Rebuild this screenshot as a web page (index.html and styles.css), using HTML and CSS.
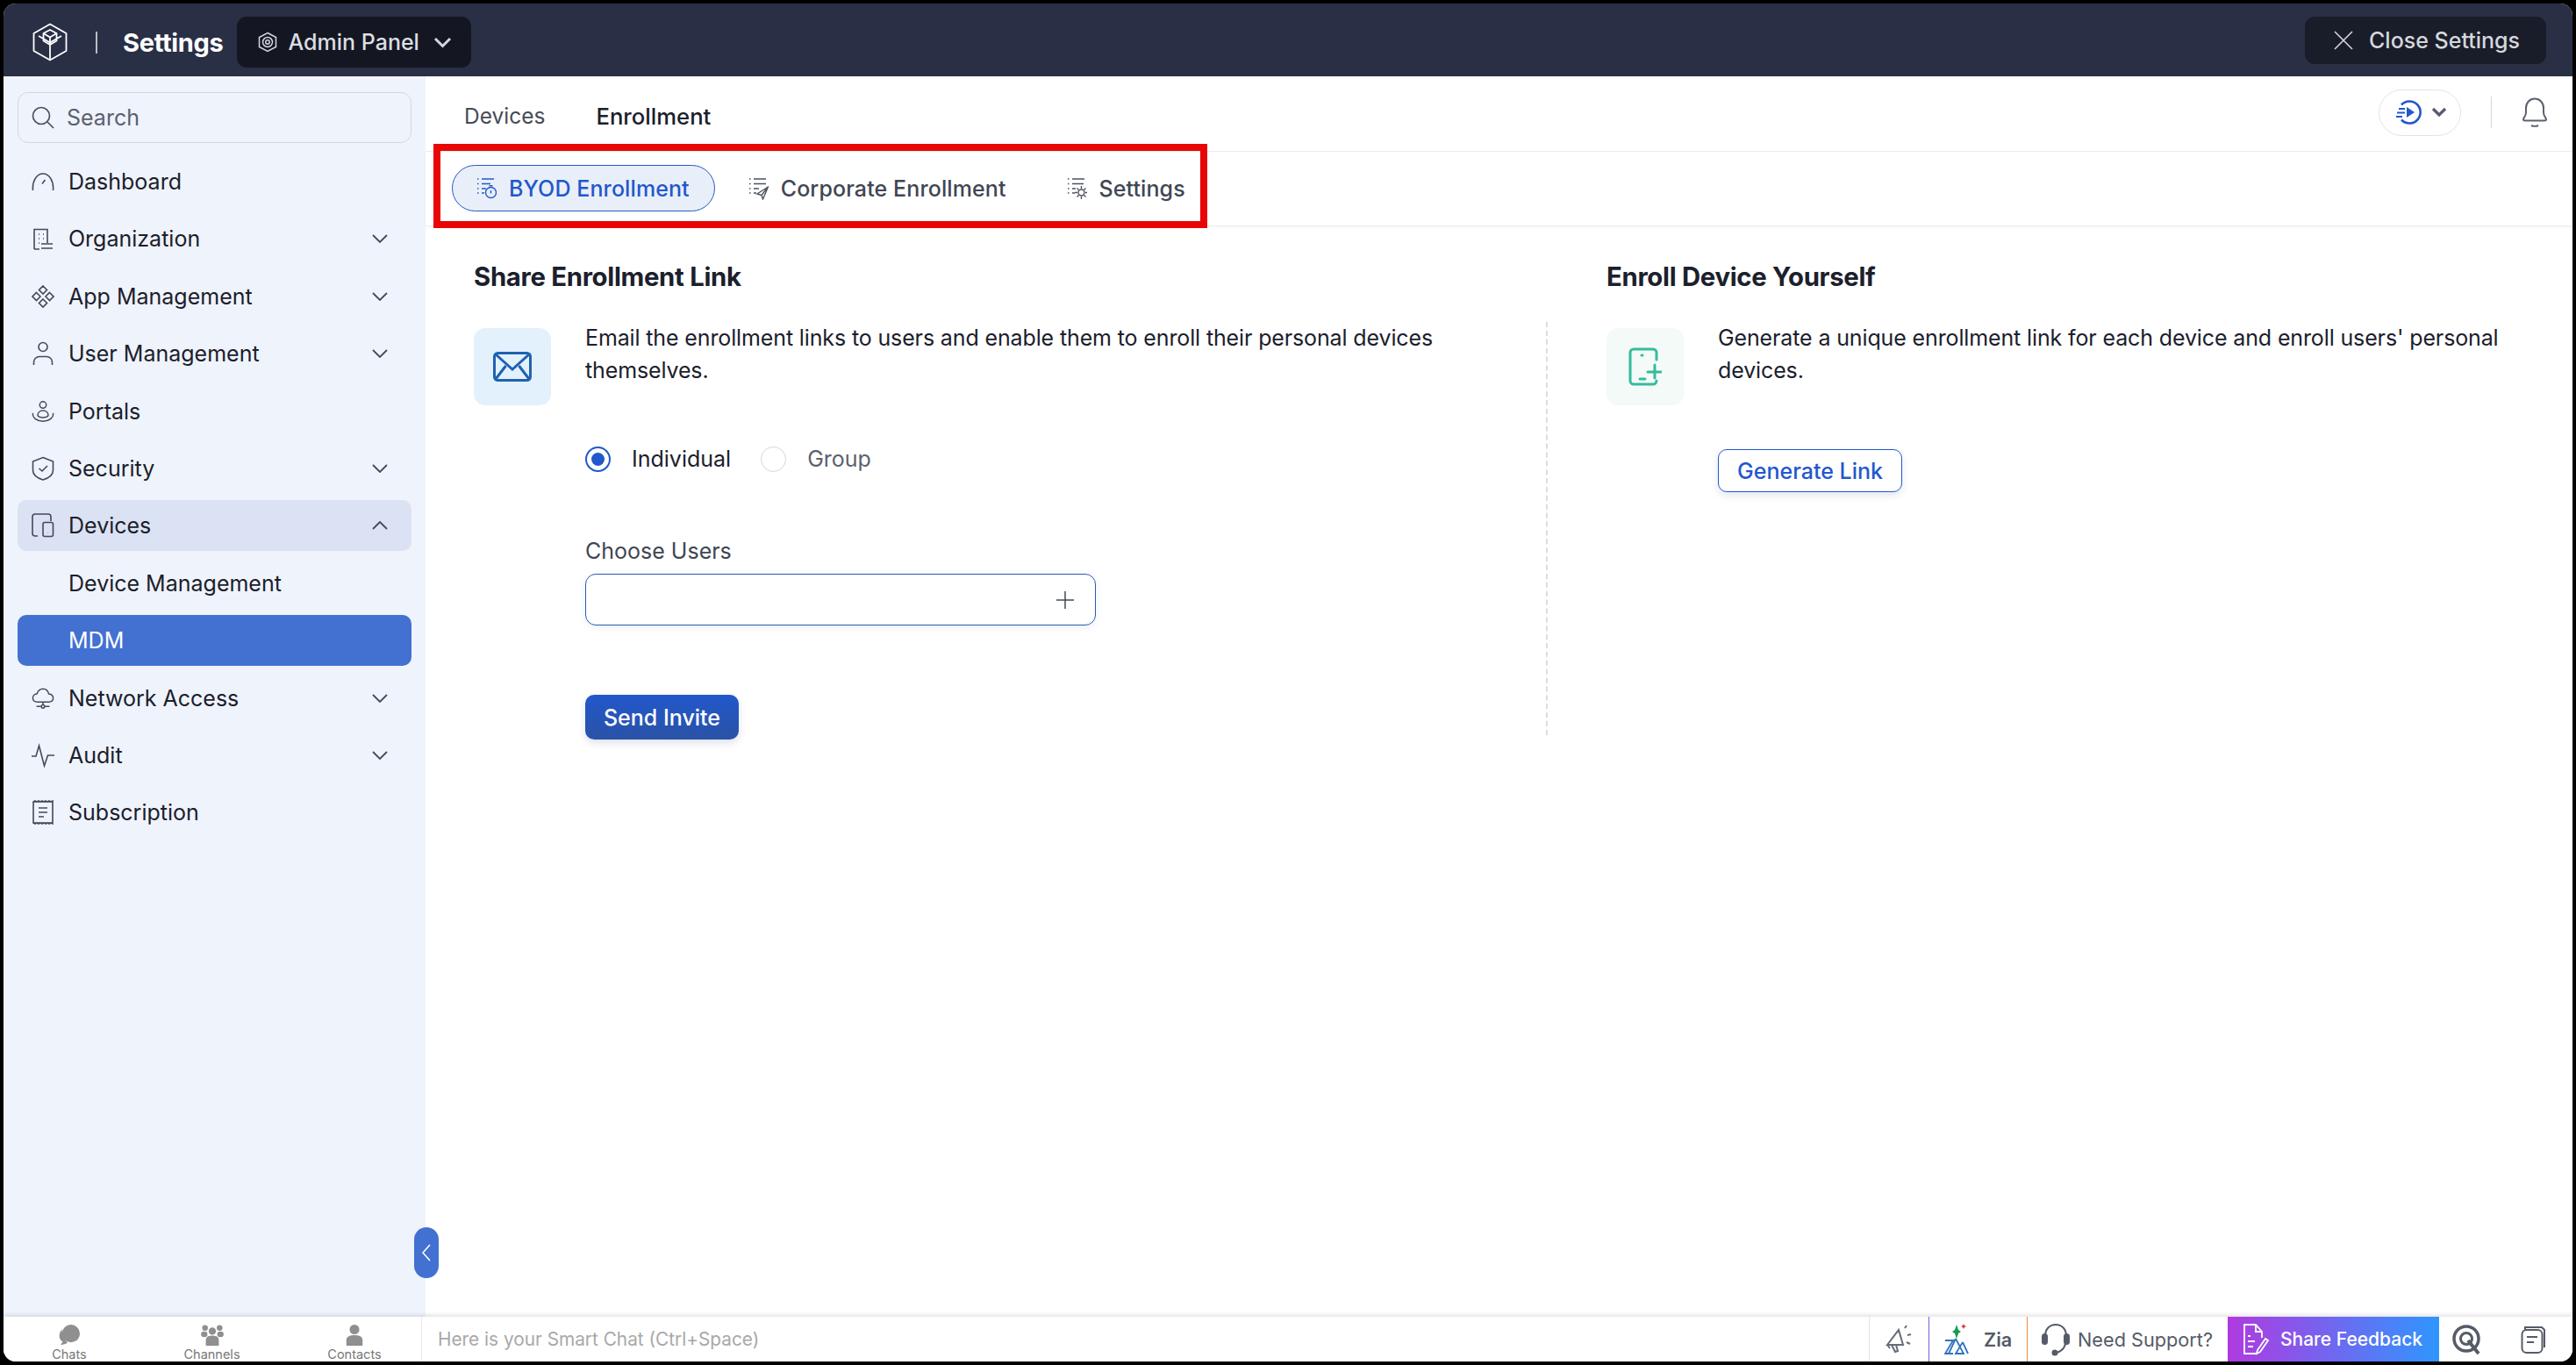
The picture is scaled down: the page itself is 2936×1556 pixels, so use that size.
FILE: index.html
```html
<!DOCTYPE html>
<html lang="en">
<head>
    <meta charset="UTF-8">
    <title>Settings - MDM Enrollment</title>
    <link rel="stylesheet" href="styles.css">
</head>
<body>
<div class="window">
    <header class="topbar">
        <svg class="logo" viewBox="0 0 40 44" fill="none" stroke="#fff" stroke-width="1.8" stroke-linejoin="round">
            <path d="M20 1.5 38.5 12v20L20 42.5 1.5 32V12z"/>
            <path d="M7 15 20 22.5 33 15M20 22.5V42M12.5 12 20 8l7.5 4v8.5L20 25l-7.500-4.500z"/>
            <path d="M12.500 12 20 16.500 27.500 12M20 16.500V25"/>
        </svg>
        <span class="top-sep"></span>
        <span class="top-title">Settings</span>
        <div class="panel-btn">
            <svg class="panel-icon" viewBox="0 0 22 24" fill="none" stroke="#d5d7dd" stroke-width="1.500">
                <path d="M11 1.500 20.500 6.500v11L11 22.500 1.500 17.500v-11z"/>
                <circle cx="11" cy="12" r="5.500"/><circle cx="11" cy="12" r="2.200"/>
            </svg>
            <span>Admin Panel</span>
            <svg class="panel-caret" viewBox="0 0 21 14" fill="none" stroke="#d5d7dd" stroke-width="3"><path d="M2 3l8.500 8.500L19 3"/></svg>
        </div>
        <div class="close-btn">
            <svg class="close-icon" viewBox="0 0 22 22" fill="none" stroke="#d5d7dd" stroke-width="1.600"><path d="M1 1l20 20M21 1 1 21"/></svg>
            <span>Close Settings</span>
        </div>
    </header>

    <div class="middle">
        <aside class="sidebar">
            <div class="search">
                <svg class="search-icon" viewBox="0 0 26 26" fill="none" stroke="#4a5160" stroke-width="1.700"><circle cx="11" cy="11" r="9.500"/><path d="M18 18l7 7"/></svg>
                <span>Search</span>
            </div>
            <nav>
                <div class="nav-item">
                    <svg class="nav-icon" viewBox="0 0 26 26"><path d="M1.500 23C.500 12 6 4 13 4s12.500 8 11.500 19M15.500 11 12 15.500"/></svg>
                    <span>Dashboard</span>
                </div>
                <div class="nav-item">
                    <svg class="nav-icon" viewBox="0 0 26 26"><path d="M3 25V2.500h15V18M3 25h6M11 19h13M11 24h13M8 8h1M13 8h1M8 13h1M13 13h1M8 18h1"/></svg>
                    <span>Organization</span>
                    <svg class="caret" viewBox="0 0 18 10"><path d="M1 1l8 8 8-8"/></svg>
                </div>
                <div class="nav-item">
                    <svg class="nav-icon" viewBox="0 0 26 26"><path d="M13 1l4.500 4.500L13 10 8.500 5.500zM13 16l4.500 4.500L13 25l-4.500-4.500zM5.500 8.500 10 13l-4.500 4.500L1 13zM20.500 8.500 25 13l-4.500 4.500L16 13z"/></svg>
                    <span>App Management</span>
                    <svg class="caret" viewBox="0 0 18 10"><path d="M1 1l8 8 8-8"/></svg>
                </div>
                <div class="nav-item">
                    <svg class="nav-icon" viewBox="0 0 26 28"><circle cx="13" cy="6.500" r="5"/><path d="M2.500 27v-3c0-4 3-6.500 6.500-6.500h8c3.500 0 6.500 2.500 6.500 6.500v3"/></svg>
                    <span>User Management</span>
                    <svg class="caret" viewBox="0 0 18 10"><path d="M1 1l8 8 8-8"/></svg>
                </div>
                <div class="nav-item">
                    <svg class="nav-icon" viewBox="0 0 28 26"><circle cx="14" cy="5" r="4"/><path d="M7.500 18c0-4 3-6 6.500-6s6.500 2 6.500 6M1.500 15c-.500 6 5 10 12.500 10s13-4 12.500-10M7.500 18c1 1.500 3.500 2.500 6.500 2.500s5.500-1 6.500-2.500"/></svg>
                    <span>Portals</span>
                </div>
                <div class="nav-item">
                    <svg class="nav-icon" viewBox="0 0 26 28"><path d="M13 1.500 24.500 6v10c0 5-5 9-11.500 11C6.500 25 1.500 21 1.500 16V6z"/><path d="M8.500 14l3.500 3 6-6"/></svg>
                    <span>Security</span>
                    <svg class="caret" viewBox="0 0 18 10"><path d="M1 1l8 8 8-8"/></svg>
                </div>
                <div class="nav-item nav-open">
                    <svg class="nav-icon" viewBox="0 0 26 28"><path d="M7 26H4a3 3 0 0 1-3-3V4a3 3 0 0 1 3-3h15a3 3 0 0 1 3 3v5"/><rect x="13" y="10.500" width="11.500" height="16" rx="2"/><path d="M18.700 22.500h.2"/></svg>
                    <span>Devices</span>
                    <svg class="caret" viewBox="0 0 18 10"><path d="M1 9l8-8 8 8"/></svg>
                </div>
                <div class="nav-item nav-sub"><span>Device Management</span></div>
                <div class="nav-item nav-sub nav-active"><span>MDM</span></div>
                <div class="nav-item">
                    <svg class="nav-icon" viewBox="0 0 28 26"><path d="M7 17.500c-3.500 0-5.500-2-5.500-5s2.500-5 5-5C8 3.500 11 1.500 14 1.500s6 2 7 6c2.500 0 5.500 2 5.500 5s-2 5-5.500 5z"/><path d="M14 17.500V21M6 23h5.500M16.500 23H22"/><circle cx="14" cy="23" r="2"/></svg>
                    <span>Network Access</span>
                    <svg class="caret" viewBox="0 0 18 10"><path d="M1 1l8 8 8-8"/></svg>
                </div>
                <div class="nav-item">
                    <svg class="nav-icon" viewBox="0 0 26 26"><path d="M0 14h5l3.500-12 6 23 4-12h7.500"/></svg>
                    <span>Audit</span>
                    <svg class="caret" viewBox="0 0 18 10"><path d="M1 1l8 8 8-8"/></svg>
                </div>
                <div class="nav-item">
                    <svg class="nav-icon" viewBox="0 0 26 28"><path d="M2 2h22v24H2zM2 2l2-1 2 1 2-1 2 1 2-1 2 1 2-1 2 1 2-1 2 1 2-1 0 1M2 26l2 1 2-1 2 1 2-1 2 1 2-1 2 1 2-1 2 1 2-1 2 1 0-1M8 9h10M8 14h10M8 19h6"/></svg>
                    <span>Subscription</span>
                </div>
            </nav>
        </aside>

        <main class="content">
            <div class="tabs">
                <span class="tab">Devices</span>
                <span class="tab tab-current">Enrollment</span>
                <div class="tabs-right">
                    <div class="play-pill">
                        <svg class="play-icon" viewBox="0 0 30 30" fill="none" stroke="#2258cc" stroke-width="2.600">
                            <path d="M6 6.500A12.500 12.500 0 1 1 6 23.500"/>
                            <path d="M12 9l9 6-9 6z" fill="#2258cc" stroke="none"/>
                            <path d="M3 11h7M1 15.500h9M0 20h7" stroke-width="2"/>
                        </svg>
                        <svg class="play-caret" viewBox="0 0 18 12" fill="none" stroke="#565c6a" stroke-width="3.200"><path d="M2 2l7 7 7-7"/></svg>
                    </div>
                    <span class="right-sep"></span>
                    <svg class="bell" viewBox="0 0 30 34" fill="none" stroke="#5b6270" stroke-width="2"><path d="M2 25c0-2 3-3 3-8v-5C5 6 9.500 1.500 15 1.500S25 6 25 12v5c0 5 3 6 3 8 0 1-1 1.500-2 1.500H4c-1 0-2-.5-2-1.500z"/><path d="M11 32c2 1 6 1 8 0"/></svg>
                </div>
            </div>

            <div class="subtabs">
                <div class="subtab subtab-current">
                    <svg class="sub-icon" viewBox="0 0 22 26"><path d="M5 2h14M0 2h1.500M0 7.500h1.500M5 7.500h10M0 13h1.500M5 13h5M0 18h1.500M5 18h3"/><circle cx="15.500" cy="17.500" r="6"/><path d="M15.500 15v3.500M13.500 9.800h4"/></svg>
                    <span>BYOD Enrollment</span>
                </div>
                <div class="subtab">
                    <svg class="sub-icon" viewBox="0 0 22 26"><path d="M5 2h14M0 2h1.500M0 7.500h1.500M5 7.500h14M0 13h1.500M5 13h6M0 18h1.500M5 18h3"/><path d="M21.500 11 9 19l5 1.500 1.500 4.500zM14 20.500l7.500-9.500"/></svg>
                    <span>Corporate Enrollment</span>
                </div>
                <div class="subtab">
                    <svg class="sub-icon" viewBox="0 0 22 26"><path d="M5 2h14M0 2h1.500M0 7.500h1.500M5 7.500h13M0 13h1.500M5 13h4M0 18h1.500M5 18h3"/><circle cx="15.500" cy="17.500" r="3.500"/><path d="M15.500 10v3M15.500 22v3M8 17.500h3M20 17.500h2M10.500 12.500l2 2M18.500 20.500l2 2M20.500 12.500l-2 2M12.500 20.500l-2 2"/></svg>
                    <span>Settings</span>
                </div>
            </div>

            <div class="columns">
                <section class="col-left">
                    <h2 class="col-title">Share Enrollment Link</h2>
                    <div class="col-body">
                        <div class="icon-box icon-box-blue">
                            <svg class="mail-icon" viewBox="0 0 44 34" fill="none" stroke="#1f62b0" stroke-width="3"><rect x="1.500" y="1.500" width="41" height="31" rx="4"/><path d="M3 3l19 17L41 3M3 31l11.500-15M41 31 29.500 16"/></svg>
                        </div>
                        <div class="col-main">
                            <p class="desc">Email the enrollment links to users and enable them to enroll their personal devices themselves.</p>
                            <div class="radios">
                                <span class="radio radio-on"></span>
                                <span class="radio-label">Individual</span>
                                <span class="radio"></span>
                                <span class="radio-label radio-label-off">Group</span>
                            </div>
                            <label class="field-label">Choose Users</label>
                            <div class="user-input">
                                <svg class="plus" viewBox="0 0 20 20" fill="none" stroke="#444a56" stroke-width="1.500"><path d="M10 0v20M0 10h20"/></svg>
                            </div>
                            <div class="btn-primary">Send Invite</div>
                        </div>
                    </div>
                </section>
                <section class="col-right">
                    <h2 class="col-title col-title-right">Enroll Device Yourself</h2>
                    <div class="col-body col-body-right">
                        <div class="icon-box icon-box-green">
                            <svg class="phone-icon" viewBox="0 0 38 44" fill="none" stroke="#37bb9c" stroke-width="3" stroke-linecap="round"><path d="M32 14V6a4 4 0 0 0-4-4H6a4 4 0 0 0-4 4v32a4 4 0 0 0 4 4h22a4 4 0 0 0 4-4"/><path d="M30 20v15M22 28h15M13 36h6M15 9h1"/></svg>
                        </div>
                        <div class="col-main">
                            <p class="desc">Generate a unique enrollment link for each device and enroll users' personal devices.</p>
                            <div class="btn-outline">Generate Link</div>
                        </div>
                    </div>
                </section>
            </div>
        </main>
    </div>

    <footer class="bottombar">
        <div class="chat-tabs">
            <div class="chat-tab">
                <svg viewBox="0 0 28 26" fill="#8f8f8f"><circle cx="16" cy="11" r="11"/><path d="M5 6C0 11 1 19 6 21l-3 4c4 0 7-1 9-3-3-2-7-7-7-16z"/></svg>
                <span>Chats</span>
            </div>
            <div class="chat-tab">
                <svg viewBox="0 0 28 26" fill="#8f8f8f"><circle cx="5" cy="4" r="3.500"/><circle cx="23" cy="4" r="3.500"/><circle cx="14" cy="8" r="4.500"/><ellipse cx="4" cy="12" rx="4" ry="3.500"/><ellipse cx="24" cy="12" rx="4" ry="3.500"/><path d="M6 26v-7c0-4 3-5.500 8-5.500s8 1.500 8 5.500v7z"/></svg>
                <span>Channels</span>
            </div>
            <div class="chat-tab">
                <svg viewBox="0 0 28 26" fill="#8f8f8f"><circle cx="14" cy="6" r="6"/><path d="M4 26v-7c0-4 4-6 10-6s10 2 10 6v7z"/></svg>
                <span>Contacts</span>
            </div>
        </div>
        <div class="smart-chat">Here is your Smart Chat (Ctrl+Space)</div>
        <div class="bar-item bar-announce">
            <svg class="bar-icon" viewBox="0 0 32 34" fill="none" stroke="#666c78" stroke-width="2"><path d="M2 23 15 6l5 17zM5 27l-3-4M7 23l4 8 3-1-2-7M22 4l2-3M25 12l4-1M24 20l4 2"/></svg>
        </div>
        <div class="bar-item bar-zia">
            <svg class="zia-icon" viewBox="0 0 28 36" fill="none" stroke="#2f73c0" stroke-width="1.800"><path d="M1 19h9L1 34h9M13 17 5 34M13 17l9 17h-9l8-13M21 21l6 13"/><path d="M14 1l2 6 3 2-3 2-2 6-2-6-3-2 3-2z" fill="#149a52" stroke="none"/><path d="M22 0l1 2 2 1-2 1-1 2-1-2-2-1 2-1z" fill="#e03535" stroke="none"/></svg>
            <span>Zia</span>
        </div>
        <div class="bar-item bar-support">
            <svg class="head-icon" viewBox="0 0 32 38" fill="none" stroke="#555b68" stroke-width="2"><path d="M4 17v-2C4 7 9 2 16 2s12 5 12 13v2c0 9-4 15-11 17"/><rect x="1" y="13" width="5" height="11" rx="2.500" fill="#555b68"/><rect x="26" y="13" width="5" height="11" rx="2.500" fill="#555b68"/><circle cx="15" cy="34" r="2.500" fill="#555b68"/></svg>
            <span>Need Support?</span>
        </div>
        <div class="share-feedback">
            <svg class="doc-icon" viewBox="0 0 30 36" fill="none" stroke="#fff" stroke-width="1.800"><path d="M17 34H2V1h13l7 8v7M15 1v8h7M6 14h3M6 20h8M6 26h6M17 30l9-13 3 2-9 13-4 2z"/></svg>
            <span>Share Feedback</span>
        </div>
        <div class="bar-end">
            <svg class="q-icon" viewBox="0 0 34 36" fill="none" stroke="#555b68"><circle cx="16" cy="17" r="14" stroke-width="3.500"/><circle cx="16" cy="17" r="6.500" stroke-width="3"/><path d="M18 19l12 15" stroke-width="4"/></svg>
            <svg class="note-icon" viewBox="0 0 28 34" fill="none" stroke="#555b68" stroke-width="2"><path d="M5 6V3l19 0 3 3v20"/><rect x="1.500" y="6" width="23" height="26" rx="5"/><path d="M7 14h12M7 20h8"/></svg>
        </div>
    </footer>

    <div class="collapse-btn">
        <svg viewBox="0 0 10 20" fill="none" stroke="#fff" stroke-width="1.600"><path d="M9 1 1 10l8 9"/></svg>
    </div>
    <div class="highlight-box"></div>
</div>
</body>
</html>
```
FILE: styles.css
```css
* {
    box-sizing: border-box;
}
html, body {
    height: 100%;
}
body {
    margin: 0;
    padding: 4px;
    background-color: #000000;
    font-family: Inter, "Noto Sans", sans-serif;
    font-size: 25px;
    color: #1b202c;
    overflow: hidden;
}
.window {
    position: relative;
    display: flex;
    flex-direction: column;
    height: 100%;
    background-color: #ffffff;
    border-radius: 14px;
    overflow: hidden;
}

/* top bar */
.topbar {
    display: flex;
    align-items: center;
    flex: 0 0 83px;
    padding: 5px 30px 0 33px;
    background-color: #292f45;
    color: #ffffff;
}
.logo {
    width: 40px;
    height: 44px;
}
.top-sep {
    width: 2px;
    height: 25px;
    margin: 0 29px 0 32px;
    background-color: #b9bcc6;
}
.top-title {
    font-size: 29px;
    font-weight: 700;
    letter-spacing: -0.3px;
}
.panel-btn {
    display: flex;
    align-items: center;
    width: 267px;
    height: 58px;
    margin-left: 15px;
    padding-left: 24px;
    border-radius: 11px;
    background-color: #141722;
    color: #dcdee3;
    font-weight: 500;
}
.panel-icon {
    width: 22px;
    height: 24px;
    margin-right: 13px;
}
.panel-caret {
    width: 21px;
    height: 14px;
    margin-left: 16px;
}
.close-btn {
    display: flex;
    align-items: center;
    align-self: flex-start;
    width: 275px;
    height: 54px;
    margin: 10px 0 0 auto;
    padding-left: 33px;
    border-radius: 11px;
    background-color: #191d29;
    color: #d5d7dd;
    font-weight: 500;
}
.close-icon {
    width: 22px;
    height: 22px;
    margin-right: 18px;
}

.middle {
    display: flex;
    flex: 1;
    min-height: 0;
}

/* sidebar */
.sidebar {
    flex: 0 0 481px;
    padding: 18px 16px 0;
    background-color: #eff3fb;
}
.search {
    display: flex;
    align-items: center;
    height: 58px;
    margin-bottom: 15px;
    padding-left: 15px;
    border: 1px solid #d3d7de;
    border-radius: 12px;
    color: #5a6170;
}
.search-icon {
    width: 26px;
    height: 26px;
    margin-right: 14px;
}
.nav-item {
    display: flex;
    align-items: center;
    height: 58px;
    margin-bottom: 7.4px;
    padding: 0 27px 0 16px;
    border-radius: 10px;
}
.nav-icon {
    flex: 0 0 26px;
    height: 28px;
    margin-right: 16px;
    fill: none;
    stroke: #444a57;
    stroke-width: 1.600;
}
.caret {
    width: 18px;
    height: 10px;
    margin-left: auto;
    fill: none;
    stroke: #444a57;
    stroke-width: 1.800;
}
.nav-open {
    background-color: #dbe2f3;
}
.nav-sub {
    padding-left: 58px;
}
.nav-active {
    background-color: #4371d1;
    color: #ffffff;
}

/* content */
.content {
    flex: 1;
    min-width: 0;
}
.tabs {
    display: flex;
    align-items: center;
    height: 86px;
    padding: 5px 28px 0 44px;
    border-bottom: 1px solid #ececef;
}
.tab {
    margin-right: 58px;
    color: #454b58;
    font-size: 24.500px;
}
.tab-current {
    color: #1b202c;
    font-size: 25.700px;
    font-weight: 500;
}
.tabs-right {
    display: flex;
    align-items: center;
    margin-left: auto;
    margin-top: -8px;
}
.play-pill {
    display: flex;
    align-items: center;
    width: 94px;
    height: 53px;
    padding-left: 19px;
    border: 1px solid #e1e3e8;
    border-radius: 27px;
}
.play-icon {
    width: 30px;
    height: 30px;
}
.play-caret {
    width: 18px;
    height: 12px;
    margin-left: 10px;
}
.right-sep {
    width: 1px;
    height: 36px;
    margin: 0 34px;
    background-color: #d5d7dc;
}
.bell {
    width: 30px;
    height: 34px;
}
.subtabs {
    display: flex;
    align-items: center;
    gap: 8px;
    height: 85px;
    padding: 0 0 1px 30px;
    border-bottom: 1px solid #ececef;
    box-shadow: 0 2px 4px rgba(0, 0, 0, 0.03);
}
.subtab {
    display: flex;
    align-items: center;
    height: 53px;
    padding: 0 30px;
    border: 1px solid transparent;
    border-radius: 27px;
    color: #404653;
    font-weight: 500;
    letter-spacing: 0.1px;
}
.sub-icon {
    width: 22px;
    height: 26px;
    margin-right: 14px;
    fill: none;
    stroke: #4c5260;
    stroke-width: 1.400;
}
.subtab-current {
    padding: 0 28px;
    border-color: #2258cc;
    background-color: #e9eff9;
    color: #2258cc;
}
.subtab-current .sub-icon {
    stroke: #2258cc;
}

.columns {
    display: flex;
    padding: 42px 0 0 55px;
}
.col-left {
    flex: 0 0 1222px;
}
.col-right {
    flex: 1;
    min-width: 0;
}
.col-title {
    height: 32px;
    margin: 0 0 35px;
    font-size: 29.300px;
    font-weight: 700;
    line-height: 32px;
    letter-spacing: -0.3px;
}
.col-title-right {
    margin-left: 69px;
}
.col-body {
    display: flex;
    gap: 39px;
}
.col-body-right {
    min-height: 471px;
    padding-left: 67px;
    border-left: 2px dashed #dcdde0;
}
.icon-box {
    display: flex;
    align-items: center;
    justify-content: center;
    flex: 0 0 88px;
    height: 88px;
    margin-top: 7px;
    border-radius: 13px;
}
.icon-box-blue {
    background-color: #e3f1fd;
}
.icon-box-green {
    background-color: #f3faf7;
}
.mail-icon {
    width: 44px;
    height: 34px;
}
.phone-icon {
    width: 38px;
    height: 44px;
}
.col-main {
    flex: 1;
    min-width: 0;
}
.desc {
    max-width: 1040px;
    margin: 0;
    line-height: 37px;
    letter-spacing: -0.13px;
}
.col-right .desc {
    max-width: 940px;
}
.radios {
    display: flex;
    align-items: center;
    height: 30px;
    margin-top: 67px;
}
.radio {
    position: relative;
    flex: 0 0 29px;
    height: 29px;
    border: 1px solid #d5d7dc;
    border-radius: 50%;
}
.radio-on {
    border: 2px solid #2258cc;
}
.radio-on::after {
    content: "";
    position: absolute;
    top: 5px;
    left: 5px;
    width: 15px;
    height: 15px;
    border-radius: 50%;
    background-color: #2258cc;
}
.radio-label {
    margin: 0 34px 0 24px;
}
.radio-label-off {
    color: #5a6170;
}
.field-label {
    display: block;
    height: 30px;
    margin-top: 75px;
    color: #404653;
    line-height: 30px;
}
.user-input {
    display: flex;
    align-items: center;
    justify-content: flex-end;
    width: 582px;
    height: 59px;
    margin-top: 11px;
    padding-right: 24px;
    border: 1.500px solid #2a5ab0;
    border-radius: 12px;
    box-shadow: 0 2px 10px rgba(50, 90, 200, 0.1);
}
.plus {
    width: 20px;
    height: 20px;
}
.btn-primary {
    display: flex;
    align-items: center;
    justify-content: center;
    width: 175px;
    height: 51px;
    margin-top: 79px;
    border-radius: 10px;
    background: linear-gradient(#2258cc, #2a52a6);
    box-shadow: 0 4px 8px rgba(30, 60, 130, 0.15);
    color: #ffffff;
    font-weight: 500;
}
.btn-outline {
    display: flex;
    align-items: center;
    justify-content: center;
    width: 210px;
    height: 49px;
    margin-top: 71px;
    border: 1.500px solid #2258cc;
    border-radius: 10px;
    box-shadow: 0 4px 8px rgba(30, 60, 130, 0.12);
    color: #2258cc;
    font-weight: 500;
}

/* bottom bar */
.bottombar {
    display: flex;
    align-items: stretch;
    flex: 0 0 51px;
    background-color: #ffffff;
    box-shadow: 0 -2px 5px rgba(0, 0, 0, 0.12);
    position: relative;
}
.chat-tabs {
    display: flex;
    gap: 12.500px;
    flex: 0 0 476px;
}
.chat-tab {
    display: flex;
    flex-direction: column;
    align-items: center;
    width: 150px;
    padding-top: 9px;
    color: #777777;
    font-size: 14.500px;
    line-height: 15px;
}
.chat-tab svg {
    width: 28px;
    height: 24px;
    margin-bottom: 2px;
}
.smart-chat {
    display: flex;
    align-items: center;
    flex: 1;
    padding-left: 18px;
    border-left: 1px solid #e9e9ec;
    color: #a8a8a8;
    font-size: 20.800px;
}
.bar-item {
    display: flex;
    align-items: center;
    color: #555b68;
    font-size: 21.700px;
}
.bar-announce {
    width: 68px;
    justify-content: center;
    border-left: 1px solid #e4e4e8;
}
.bar-icon {
    width: 32px;
    height: 34px;
}
.bar-zia {
    width: 112px;
    padding-left: 17px;
    border-left: 1px solid #6f63dd;
    font-weight: 600;
}
.zia-icon {
    width: 28px;
    height: 36px;
    margin-right: 17px;
}
.bar-support {
    width: 229px;
    padding-left: 16px;
    border-left: 1px solid #ee8a3f;
}
.head-icon {
    width: 32px;
    height: 38px;
    margin-right: 9px;
}
.share-feedback {
    display: flex;
    align-items: center;
    width: 241px;
    padding-left: 17px;
    background: linear-gradient(90deg, #b03ae0, #2f96ff);
    color: #ffffff;
    font-size: 21px;
    font-weight: 500;
}
.doc-icon {
    width: 30px;
    height: 36px;
    margin-right: 13px;
}
.bar-end {
    display: flex;
    align-items: center;
    width: 152px;
    padding-left: 15px;
}
.q-icon {
    width: 34px;
    height: 36px;
    margin-right: 44px;
}
.note-icon {
    width: 28px;
    height: 34px;
}

/* overlays */
.collapse-btn {
    position: absolute;
    top: 1395px;
    left: 468px;
    display: flex;
    align-items: center;
    justify-content: center;
    width: 28px;
    height: 58px;
    border-radius: 14px;
    background-color: #4371d1;
}
.collapse-btn svg {
    width: 10px;
    height: 20px;
}
.highlight-box {
    position: absolute;
    top: 160px;
    left: 490px;
    width: 882px;
    height: 96px;
    border: 8px solid #e90606;
}
```
